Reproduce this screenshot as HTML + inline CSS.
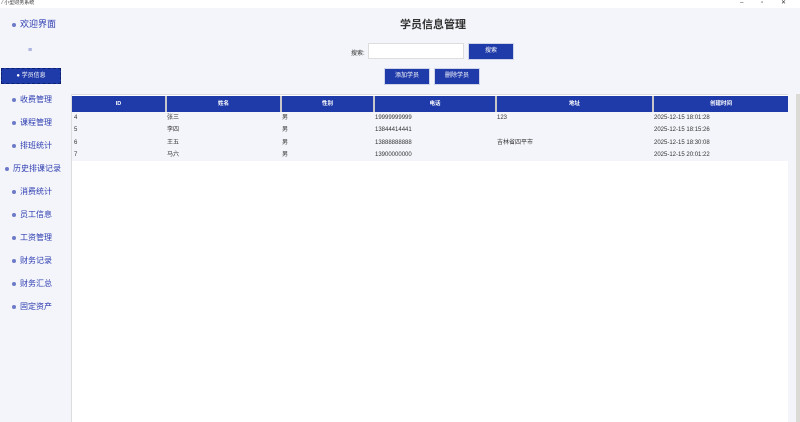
<!DOCTYPE html>
<html><head><meta charset="utf-8"><style>
*{margin:0;padding:0;box-sizing:border-box}
body{width:800px;height:422px;overflow:hidden;background:#f4f5fa;font-family:"Liberation Sans","Noto Sans CJK SC",sans-serif;position:relative}
.tb{position:absolute;left:0;top:0;width:800px;height:8px;background:#fff;font-size:5px;color:#333;line-height:7px}
.nav{position:absolute;font-size:8px;color:#2b3bb0;white-space:nowrap}
.nav b{display:inline-block;width:4px;height:4px;border-radius:50%;background:#6c7ac8;margin-right:4px;vertical-align:middle}
.sel{position:absolute;left:1px;top:68px;width:60px;height:16px;background:#1f3aa9;border:1px dashed #0c1f70;color:#fff;font-size:6px;text-align:center;line-height:14px}
.btn{position:absolute;background:#1f3aa9;color:#fff;font-size:6px;text-align:center;border:1px solid #d0d4e8}
.panel{position:absolute;left:71px;top:94px;width:717px;height:328px;background:#fff;border-left:1px solid #ddd;border-top:1px solid #ddd}
.hd{position:absolute;top:1px;height:16px;background:#1f3aa9;color:#fff;font-size:5.5px;font-weight:bold;text-align:center;line-height:16px;border-left:2px solid #c8c8c8}
.row{position:absolute;left:0;width:716px;height:12.3px;background:#f4f5fa;font-size:6px;color:#333;line-height:12px}
.row span{position:absolute}
</style></head><body>
<div class="tb"><span style="margin-left:2px">&#8260; 小型财务系统</span><span style="position:absolute;right:6px;top:0;font-size:6px;letter-spacing:8px">– ▫ ✕</span></div>
<div class="nav" style="left:12px;top:17px;font-size:9px"><b></b>欢迎界面</div>
<div class="nav" style="left:28px;top:47px;font-size:7px;color:#6c7ac8">≡</div>
<div class="sel">● 学员信息</div>
<div class="nav" style="left:12px;top:94px"><b></b>收费管理</div>
<div class="nav" style="left:12px;top:117px"><b></b>课程管理</div>
<div class="nav" style="left:12px;top:140px"><b></b>排班统计</div>
<div class="nav" style="left:5px;top:163px"><b></b>历史排课记录</div>
<div class="nav" style="left:12px;top:186px"><b></b>消费统计</div>
<div class="nav" style="left:12px;top:209px"><b></b>员工信息</div>
<div class="nav" style="left:12px;top:232px"><b></b>工资管理</div>
<div class="nav" style="left:12px;top:255px"><b></b>财务记录</div>
<div class="nav" style="left:12px;top:278px"><b></b>财务汇总</div>
<div class="nav" style="left:12px;top:301px"><b></b>固定资产</div>
<div style="position:absolute;left:400px;top:16px;font-size:11px;font-weight:bold;color:#333">学员信息管理</div>
<div style="position:absolute;left:351px;top:48px;font-size:6px;color:#333">搜索:</div>
<div style="position:absolute;left:368px;top:43px;width:96px;height:16px;background:#fff;border:1px solid #ddd"></div>
<div class="btn" style="left:468px;top:43px;width:46px;height:17px;line-height:15px">搜索</div>
<div class="btn" style="left:384px;top:68px;width:46px;height:17px;line-height:15px">添加学员</div>
<div class="btn" style="left:434px;top:68px;width:46px;height:17px;line-height:15px">删除学员</div>
<div class="panel">
<div class="hd" style="left:0;width:93px;border-left:0">ID</div>
<div class="hd" style="left:93px;width:115px">姓名</div>
<div class="hd" style="left:208px;width:93px">性别</div>
<div class="hd" style="left:301px;width:122px">电话</div>
<div class="hd" style="left:423px;width:157px">地址</div>
<div class="hd" style="left:580px;width:136px">创建时间</div>
<div class="row" style="top:17px"><span style="left:2px">4</span><span style="left:95px">张三</span><span style="left:210px">男</span><span style="left:303px">19999999999</span><span style="left:425px">123</span><span style="left:582px">2025-12-15 18:01:28</span></div>
<div class="row" style="top:29.3px"><span style="left:2px">5</span><span style="left:95px">李四</span><span style="left:210px">男</span><span style="left:303px">13844414441</span><span style="left:582px">2025-12-15 18:15:26</span></div>
<div class="row" style="top:41.6px"><span style="left:2px">6</span><span style="left:95px">王五</span><span style="left:210px">男</span><span style="left:303px">13888888888</span><span style="left:425px">吉林省四平市</span><span style="left:582px">2025-12-15 18:30:08</span></div>
<div class="row" style="top:53.9px"><span style="left:2px">7</span><span style="left:95px">马六</span><span style="left:210px">男</span><span style="left:303px">13900000000</span><span style="left:582px">2025-12-15 20:01:22</span></div>
</div>
<div style="position:absolute;left:788px;top:94px;width:8px;height:328px;background:#f4f5fa"></div>
<div style="position:absolute;left:796px;top:94px;width:4px;height:328px;background:#dcdad5"></div>
</body></html>
